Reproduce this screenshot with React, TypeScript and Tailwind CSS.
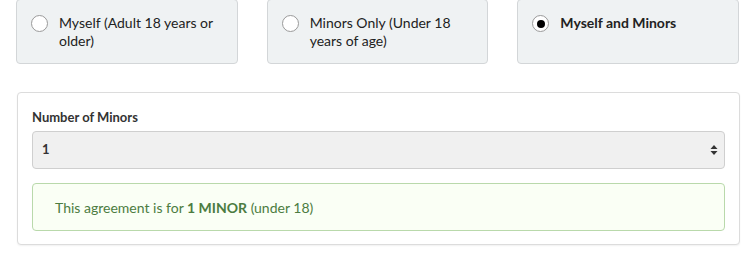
import React from "react";

const options = [
  { id: "self", label: "Myself (Adult 18 years or older)", checked: false },
  { id: "minors", label: "Minors Only (Under 18 years of age)", checked: false },
  { id: "both", label: "Myself and Minors", checked: true },
];

export default function App() {
  return (
    <div className="w-[753px] h-[256px] bg-white font-['Lato','Liberation_Sans',sans-serif] text-[#222]">
      {/* Agreement type */}
      <div className="grid grid-cols-3 gap-[29px] pl-[16px] pr-[14px] pt-0">
        {options.map((o) => (
          <label
            key={o.id}
            className="flex items-start gap-[11px] h-[65px] -mt-px rounded-[4px] border border-[#d3d6d8] bg-[#eff2f3] pl-[14px] pr-2 pt-[14px]"
          >
            <span className="mt-px flex h-[17px] w-[17px] shrink-0 items-center justify-center rounded-full border border-[#9a9a9a] bg-white">
              {o.checked && <span className="h-[8px] w-[8px] rounded-full bg-black" />}
            </span>
            <span className={`text-[14px] leading-[18px] ${o.checked ? "font-bold" : ""}`}>{o.label}</span>
          </label>
        ))}
      </div>

      {/* Minors panel */}
      <div className="ml-[17px] mr-[13px] mt-[28px] rounded-[4px] border border-[#dcdcdc] bg-white px-[14px] pt-[16px] pb-[13px] shadow-[0_1px_2px_rgba(0,0,0,0.06)]">
        <div className="text-[13px] font-bold leading-[16px] text-[#333]">Number of Minors</div>
        <div className="mt-[6px] flex h-[38px] items-center justify-between rounded-[4px] border border-[#cfcfcf] bg-[#f0f0f0] pl-[9px] pr-[6px]">
          <span className="text-[13px] font-bold text-[#333]">1</span>
          <svg width="8" height="12" viewBox="0 0 8 12" className="text-[#333]">
            <path d="M4 1 L7.5 5 H0.5 Z" fill="currentColor" />
            <path d="M4 11 L7.5 7 H0.5 Z" fill="currentColor" />
          </svg>
        </div>
        <div className="mt-[14px] flex h-[48px] items-center rounded-[4px] border border-[#b9d9ab] bg-[#fafff5] pl-[22px] text-[14px] text-[#4c7c41]">
          This agreement is for&nbsp;<b className="font-bold">1 MINOR</b>&nbsp;(under 18)
        </div>
      </div>
    </div>
  );
}
